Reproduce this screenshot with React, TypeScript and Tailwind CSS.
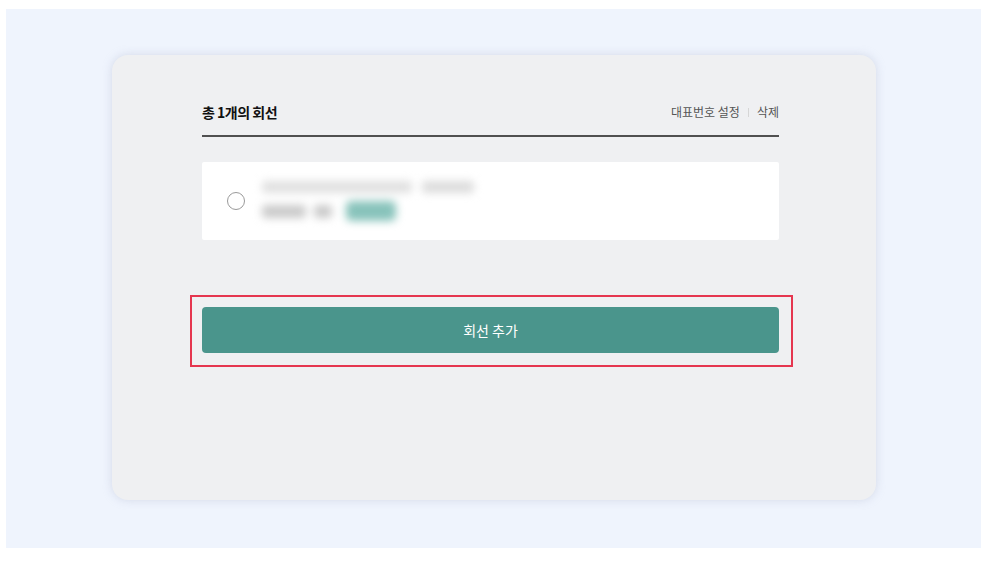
import React from "react";

export default function App() {
  const font = { fontFamily: '"Noto Sans CJK KR", "Noto Sans", sans-serif' };
  return (
    <div className="w-full h-[570px] bg-white pt-[9px] pl-[6px]" style={font}>
      <div className="w-[975px] h-[539px] bg-[#eff4fd] pt-[46px] pl-[106px]">
        <div className="w-[764px] h-[445px] rounded-[16px] bg-[#eff0f2] shadow-[0_0_10px_rgba(200,205,225,0.7)] pt-[46px] pl-[90px] pr-[97px]">
          <div className="flex items-center justify-between pb-[12px] border-b-2 border-[#505050]">
            <div className="text-[14px] leading-[22px] font-bold text-[#111] tracking-[-0.5px]">총 1개의 회선</div>
            <div className="flex items-center text-[12px] leading-[22px] text-[#555]">
              <span>대표번호 설정</span>
              <span className="mx-[8px] w-px h-[9px] bg-[#d6d6d6]"></span>
              <span>삭제</span>
            </div>
          </div>
          <div className="mt-[25px] h-[78px] bg-white rounded-[2px] flex items-center pl-[25px]">
            <div className="w-[18px] h-[18px] rounded-full border border-[#9a9a9a] bg-white shrink-0"></div>
            <div className="ml-[17px] flex flex-col gap-[8px] blur-[4px]">
              <div className="flex items-center gap-[10px]">
                <div className="w-[150px] h-[12px] rounded bg-[#e0e0e0]"></div>
                <div className="w-[52px] h-[12px] rounded bg-[#dcdcdc]"></div>
              </div>
              <div className="flex items-center gap-[8px]">
                <div className="w-[44px] h-[13px] rounded bg-[#cacaca]"></div>
                <div className="w-[18px] h-[13px] rounded bg-[#cacaca]"></div>
                <div className="ml-[6px] w-[50px] h-[20px] rounded-[5px] bg-[#88c3bb]"></div>
              </div>
            </div>
          </div>
          <div className="mt-[55px] -ml-[12px] -mr-[14px] border-2 border-[#e5364f] pt-[10px] pl-[10px] pr-[12px] pb-[12px]">
            <button className="w-full h-[46px] rounded-[4px] bg-[#4a958c] text-white text-[14px] flex items-center justify-center">
              회선 추가
            </button>
          </div>
        </div>
      </div>
    </div>
  );
}
